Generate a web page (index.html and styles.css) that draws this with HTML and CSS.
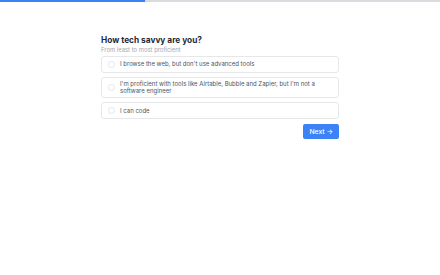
FILE: index.html
```html
<!DOCTYPE html>
<html>
<head>
<meta charset="utf-8">
<link rel="stylesheet" href="styles.css">
</head>
<body>
<div class="progress"><div class="progress-fill" style="width:33%"></div></div>
<main class="quiz">
  <h1 class="title">How tech savvy are you?</h1>
  <p class="subtitle">From least to most proficient</p>
  <div class="options">
    <label class="option"><span class="radio"></span><span class="option-text">I browse the web, but don't use advanced tools</span></label>
    <label class="option"><span class="radio"></span><span class="option-text">I'm proficient with tools like Airtable, Bubble and Zapier, but I'm not a software engineer</span></label>
    <label class="option"><span class="radio"></span><span class="option-text">I can code</span></label>
  </div>
  <div class="actions">
    <button class="next">Next <span class="arrow">→</span></button>
  </div>
</main>
</body>
</html>
```
FILE: styles.css
```css
html, body {
  margin: 0;
  padding: 0;
  background: #fff;
  font-family: Inter, "Noto Sans", sans-serif;
  color: #1f2937;
}
.progress {
  height: 2px;
  background: #d9dbe1;
}
.progress-fill {
  height: 100%;
  background: #3b82f6;
}
.quiz {
  width: 238px;
  margin: 0 auto;
  padding-top: 33px;
}
.title {
  margin: 0;
  font-size: 8.3px;
  font-weight: 700;
  line-height: 10px;
  color: #1f2937;
}
.subtitle {
  margin: 1.5px 0 0;
  font-size: 5.9px;
  line-height: 6px;
  color: #a1a7b0;
}
.options {
  display: flex;
  flex-direction: column;
  gap: 4px;
  margin-top: 3.5px;
}
.option {
  display: flex;
  align-items: center;
  gap: 5px;
  border: 1px solid #e5e7eb;
  border-radius: 3px;
  padding: 3px 6px;
}
.radio {
  flex: none;
  width: 5px;
  height: 5px;
  margin: 1px 0;
  border: 1px solid #e3e5e9;
  border-radius: 50%;
}
.option-text {
  font-size: 6px;
  line-height: 6.7px;
  color: #4b5563;
}
.actions {
  display: flex;
  justify-content: flex-end;
  margin-top: 5px;
}
.next {
  font-family: Inter, "Noto Sans", sans-serif;
  background: #3b82f6;
  color: #fff;
  border: none;
  border-radius: 2px;
  font-size: 6.8px;
  font-weight: 500;
  height: 15px;
  padding: 0 6px;
  cursor: pointer;
}
```
